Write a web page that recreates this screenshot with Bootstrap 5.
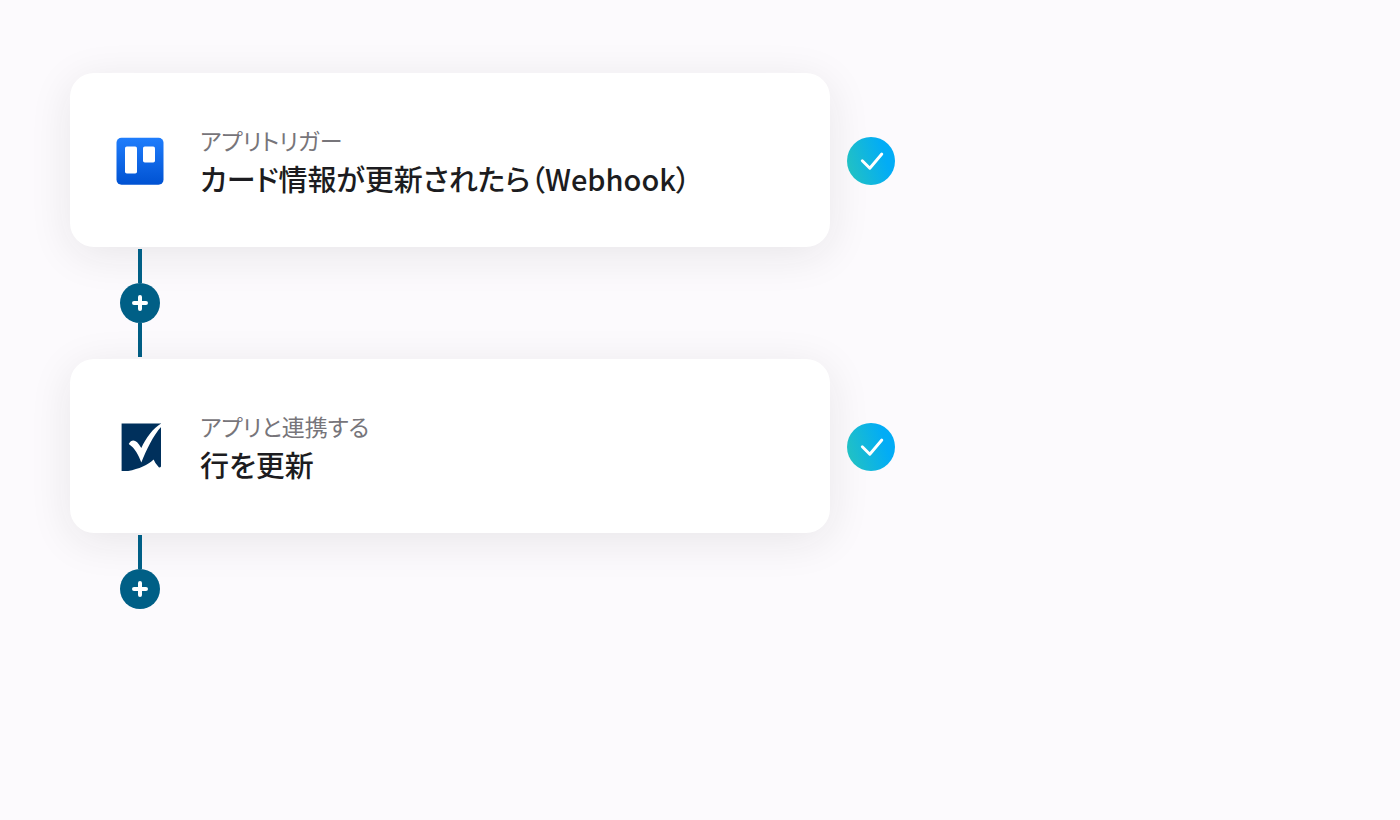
<!DOCTYPE html>
<html lang="ja">
<head>
<meta charset="utf-8">
<meta name="viewport" content="width=device-width, initial-scale=1">
<title>フロー</title>
<link href="https://cdn.jsdelivr.net/npm/bootstrap@5.3.0/dist/css/bootstrap.min.css" rel="stylesheet">
<style>
body { background: #fcfafd; font-family: "Noto Sans CJK JP", sans-serif; }
.flow { padding: 73px 70px; }
.step-row { gap: 17px; }
.step-card { flex: 0 1 760px; min-height: 174px; border-radius: 24px; padding: 2px 46px 0; gap: 36px; box-shadow: 0 8px 44px rgba(30, 28, 30, .09); }
.step-text { padding-top: 2px; }
.step-label { font-size: 23px; line-height: 32px; color: #77757a; font-feature-settings: "palt"; }
.step-title { font-size: 29px; line-height: 44px; font-weight: 500; color: #1c1c20; font-feature-settings: "palt"; }
.step-done { margin-top: 2px; }
.connector { width: 140px; padding: 2px 0; }
.connector-line { width: 4px; height: 34px; background: #005f86; }
.add-btn { width: 40px; height: 40px; background: #005f86; }
</style>
</head>
<body>
<main class="flow">
  <section class="step-row d-flex align-items-center">
    <div class="step-card d-flex align-items-center bg-white">
      <svg class="flex-shrink-0" width="48" height="48" viewBox="0 0 48 48" role="img" aria-label="Trello">
        <defs><linearGradient id="boardBlue" x1="0" y1="0" x2="0" y2="1"><stop offset="0" stop-color="#1f7dfc"/><stop offset="1" stop-color="#0052d2"/></linearGradient></defs>
        <rect x=".5" y=".7" width="47" height="47" rx="5" fill="url(#boardBlue)"/>
        <rect x="9" y="9.5" width="12" height="27" rx="1.8" fill="#fff"/>
        <rect x="27" y="9.5" width="12" height="16" rx="1.8" fill="#fff"/>
      </svg>
      <div class="step-text">
        <div class="step-label">アプリトリガー</div>
        <h2 class="step-title mb-0">カード情報が更新されたら（Webhook）</h2>
      </div>
    </div>
    <svg class="step-done flex-shrink-0" width="48" height="48" viewBox="0 0 48 48" role="img" aria-label="完了">
      <defs><linearGradient id="doneFill" x1="0" y1=".65" x2="1" y2=".35"><stop offset=".05" stop-color="#20c0c6"/><stop offset=".8" stop-color="#02acf6"/></linearGradient></defs>
      <circle cx="24" cy="24" r="24" fill="url(#doneFill)"/>
      <path d="M15.3 23.8 22.8 31.2 34.8 17" fill="none" stroke="#fff" stroke-width="2.9" stroke-linecap="round" stroke-linejoin="round"/>
    </svg>
  </section>

  <div class="connector d-flex flex-column align-items-center">
    <span class="connector-line"></span>
    <button type="button" class="add-btn btn rounded-circle border-0 p-0 d-flex align-items-center justify-content-center" aria-label="追加">
      <svg width="16" height="16" viewBox="0 0 16 16"><path d="M8 2v12M2 8h12" stroke="#fff" stroke-width="4" stroke-linecap="round"/></svg>
    </button>
    <span class="connector-line"></span>
  </div>

  <section class="step-row d-flex align-items-center">
    <div class="step-card d-flex align-items-center bg-white">
      <svg class="flex-shrink-0" width="48" height="48" viewBox="0 0 48 48" role="img" aria-label="Smartsheet">
        <path d="M5.6 .5H45V43.5Q43.5 45.5 42 43.2Q39.5 41 37.6 36.5C31 43 19 47.5 5.6 49Z" fill="#00305c"/>
        <path d="M45.5 .2V3.5C37 12.5 30.5 27 25.3 39.5C22.5 32 19 25 12.7 21C16 15.5 20.5 16.5 25.3 25C30 15 36.5 5.5 45.5 .2Z" fill="#fff"/>
      </svg>
      <div class="step-text">
        <div class="step-label">アプリと連携する</div>
        <h2 class="step-title mb-0">行を更新</h2>
      </div>
    </div>
    <svg class="step-done flex-shrink-0" width="48" height="48" viewBox="0 0 48 48" role="img" aria-label="完了">
      <circle cx="24" cy="24" r="24" fill="url(#doneFill)"/>
      <path d="M15.3 23.8 22.8 31.2 34.8 17" fill="none" stroke="#fff" stroke-width="2.9" stroke-linecap="round" stroke-linejoin="round"/>
    </svg>
  </section>

  <div class="connector d-flex flex-column align-items-center">
    <span class="connector-line"></span>
    <button type="button" class="add-btn btn rounded-circle border-0 p-0 d-flex align-items-center justify-content-center" aria-label="追加">
      <svg width="16" height="16" viewBox="0 0 16 16"><path d="M8 2v12M2 8h12" stroke="#fff" stroke-width="4" stroke-linecap="round"/></svg>
    </button>
  </div>
</main>
<script src="https://cdn.jsdelivr.net/npm/bootstrap@5.3.0/dist/js/bootstrap.bundle.min.js"></script>
</body>
</html>
